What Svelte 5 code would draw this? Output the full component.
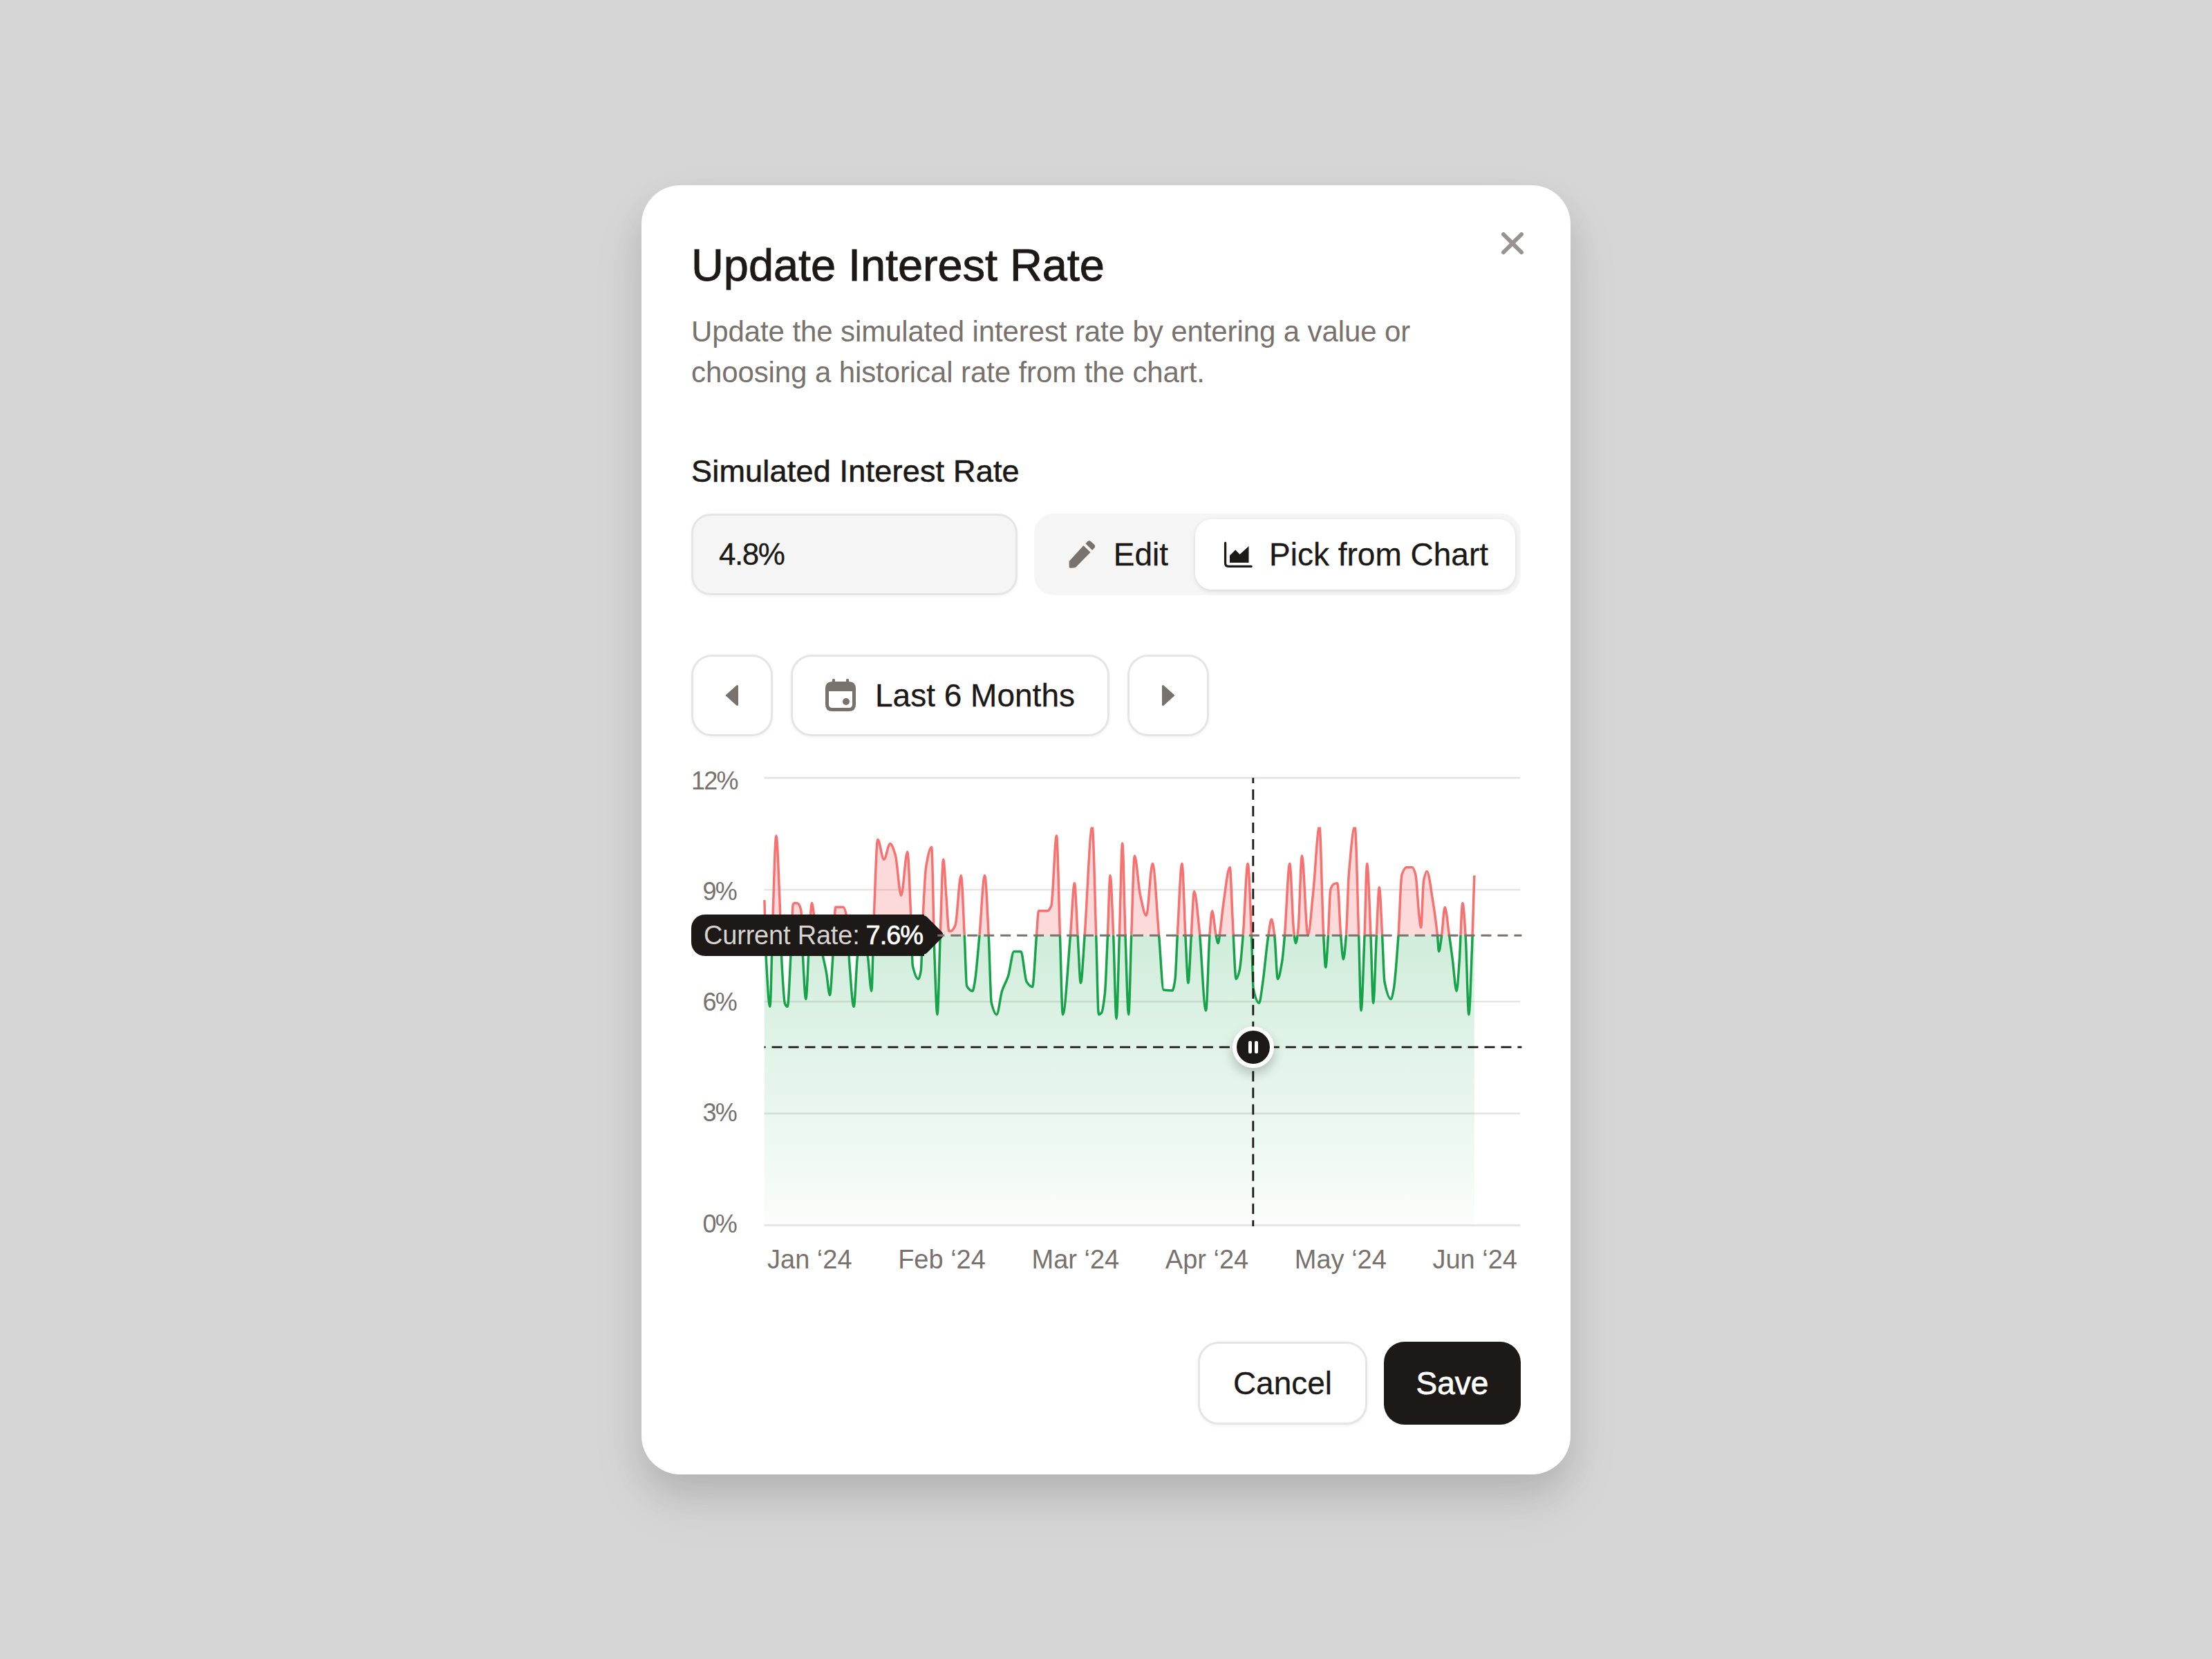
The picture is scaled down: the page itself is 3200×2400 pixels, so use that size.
<script>
  // traced rate line, in chart units (1/3 px)
  const trace = [
    [16, 335], [24, 600], [40, 798], [52, 420], [67, 55], [82, 330], [92, 620], [105, 785], [116, 798], [130, 580], [140, 355], [148, 347], [162, 350], [175, 380],
    [182, 560], [196, 765], [210, 520], [222, 348], [234, 420], [285, 650], [300, 748], [312, 600], [325, 365], [358, 365], [372, 400], [386, 620], [404, 798], [420, 580],
    [440, 450], [465, 580], [481, 730], [492, 400], [508, 72], [535, 158], [562, 90], [585, 140], [610, 315], [637, 125], [652, 400], [660, 620], [685, 678], [696, 640],
    [705, 400], [718, 190], [742, 105], [755, 580], [767, 832], [780, 480], [793, 158], [806, 320], [818, 470], [825, 470], [845, 445], [870, 228], [885, 490], [895, 708],
    [920, 730], [930, 690], [950, 490], [973, 228], [990, 490], [1002, 780], [1025, 832], [1048, 730], [1075, 665], [1100, 558], [1130, 558], [1155, 690], [1180, 712],
    [1198, 490], [1207, 382], [1245, 382], [1262, 360], [1285, 55], [1300, 490], [1312, 832], [1345, 490], [1363, 262], [1377, 490], [1390, 695], [1407, 490], [1440, 15],
    [1457, 490], [1468, 832], [1480, 825], [1495, 740], [1507, 490], [1518, 228], [1532, 490], [1545, 850], [1558, 490], [1571, 88], [1584, 490], [1598, 832], [1610, 490],
    [1624, 142], [1648, 310], [1675, 402], [1702, 176], [1730, 490], [1750, 725], [1788, 728], [1800, 680], [1810, 490], [1830, 176], [1845, 490], [1857, 695], [1870, 490],
    [1883, 297], [1905, 460], [1934, 815], [1950, 490], [1961, 382], [1978, 490], [1987, 522], [1997, 460], [2010, 350], [2038, 193], [2050, 420], [2065, 678], [2080, 640],
    [2095, 490], [2116, 176], [2132, 490], [2140, 720], [2165, 782], [2180, 700], [2205, 490], [2219, 418], [2232, 490], [2246, 678], [2265, 600], [2276, 490], [2298, 176],
    [2315, 460], [2324, 522], [2335, 460], [2351, 142], [2377, 488], [2400, 300], [2427, 15], [2445, 490], [2454, 627], [2465, 490], [2475, 290], [2490, 265], [2505, 262],
    [2520, 490], [2531, 592], [2543, 490], [2555, 220], [2581, 15], [2598, 490], [2608, 815], [2623, 490], [2634, 176], [2650, 490], [2661, 782], [2675, 490], [2687, 280],
    [2700, 490], [2710, 690], [2737, 765], [2750, 720], [2770, 490], [2785, 225], [2805, 193], [2830, 193], [2845, 225], [2860, 400], [2868, 454], [2880, 250], [2894, 210],
    [2920, 340], [2940, 490], [2946, 558], [2958, 490], [2972, 366], [2990, 480], [3005, 590], [3023, 730], [3035, 600], [3049, 348], [3062, 490], [3076, 832], [3090, 540],
    [3100, 228]
  ];

  // monotone cubic through the points, so peaks don't overshoot
  function monotone(pts) {
    const n = pts.length;
    const slopes = [];
    for (let i = 0; i < n - 1; i++) {
      slopes.push((pts[i + 1][1] - pts[i][1]) / (pts[i + 1][0] - pts[i][0]));
    }
    const tan = pts.map((_, i) => {
      if (i === 0) return slopes[0];
      if (i === n - 1) return slopes[n - 2];
      if (slopes[i - 1] * slopes[i] <= 0) return 0;
      return (2 * slopes[i - 1] * slopes[i]) / (slopes[i - 1] + slopes[i]);
    });
    let d = `M${pts[0][0]} ${pts[0][1]}`;
    for (let i = 0; i < n - 1; i++) {
      const h = (pts[i + 1][0] - pts[i][0]) / 3;
      d += `C${pts[i][0] + h} ${pts[i][1] + tan[i] * h} ${pts[i + 1][0] - h} ${pts[i + 1][1] - tan[i + 1] * h} ${pts[i + 1][0]} ${pts[i + 1][1]}`;
    }
    return d;
  }

  const line = monotone(trace);
  const area = `${line}L3100 1748L16 1748Z`;
  const gridRows = [-196, 290, 776, 1262, 1748];
  const yLabels = ['12%', '9%', '6%', '3%', '0%'];
  const months = ['Jan ‘24', 'Feb ‘24', 'Mar ‘24', 'Apr ‘24', 'May ‘24', 'Jun ‘24'];
</script>

<div class="page">
  <div class="modal">
    <button class="close" aria-label="Close">
      <svg viewBox="0 0 32 32" width="32" height="32"><path d="M3 3L29 29M29 3L3 29" /></svg>
    </button>

    <h1>Update Interest Rate</h1>
    <p class="desc">Update the simulated interest rate by entering a value or choosing a historical rate from the chart.</p>

    <div class="label">Simulated Interest Rate</div>
    <div class="rate-row">
      <div class="input">4.8%</div>
      <div class="segment">
        <div class="tab">
          <svg class="tab-icon" viewBox="0 0 24 24">
            <path fill="#78716c" d="M2 17.500L13.300 5 18.800 10.300 7.200 22.200Q5.500 22.800 3 22.800 2 22.800 2 21.800Z" />
            <path fill="#78716c" d="M15 3.600L16.600 1.800Q17.800 0.700 19 1.700L21.900 4.400Q23 5.600 22 6.800L20.300 8.700Z" />
          </svg>
          <span>Edit</span>
        </div>
        <div class="tab active">
          <svg class="tab-icon" viewBox="0 0 24 24">
            <path fill="none" stroke="#1c1917" stroke-width="1.800" stroke-linecap="round" d="M2.500 3V19Q2.500 21.500 5 21.500H23" />
            <path fill="#1c1917" d="M6 18.500V13L10.500 8.500 14 12 21 5.500V18.500Z" />
          </svg>
          <span>Pick from Chart</span>
        </div>
      </div>
    </div>

    <div class="range-row">
      <button class="range-btn square" aria-label="Previous">
        <svg viewBox="0 0 18 32" width="18" height="32"><path d="M16.500 2.500V29.500L1.500 16Z" /></svg>
      </button>
      <button class="range-btn range">
        <svg class="cal" viewBox="0 0 44 48" width="44" height="48">
          <rect x="10" y="0" width="4" height="8" rx="1.500" fill="#78716c" />
          <rect x="30" y="0" width="4" height="8" rx="1.500" fill="#78716c" />
          <path fill="#78716c" d="M10 4H34Q44 4 44 14V37Q44 47 34 47H10Q0 47 0 37V14Q0 4 10 4ZM5 18V37Q5 42 10 42H34Q39 42 39 37V18Z" fill-rule="evenodd" />
          <circle cx="30" cy="33" r="5" fill="#78716c" />
        </svg>
        <span>Last 6 Months</span>
      </button>
      <button class="range-btn square" aria-label="Next">
        <svg viewBox="0 0 18 32" width="18" height="32"><path d="M1.500 2.500V29.500L16.500 16Z" /></svg>
      </button>
    </div>

    <div class="chart">
      <div class="y-axis">
        {#each yLabels as label}
          <span>{label}</span>
        {/each}
      </div>

      <div class="plot">
        <svg class="layer" viewBox="15 -197 3285 1946">
          <defs>
            <linearGradient id="below" gradientUnits="userSpaceOnUse" x1="0" y1="488" x2="0" y2="1748">
              <stop offset="0" stop-color="#16a34a" stop-opacity="0.2" />
              <stop offset="1" stop-color="#16a34a" stop-opacity="0.02" />
            </linearGradient>
            <clipPath id="above-rate"><rect x="0" y="18" width="3300" height="470" /></clipPath>
            <clipPath id="below-rate"><rect x="0" y="488" width="3300" height="1270" /></clipPath>
          </defs>

          {#each gridRows as y}
            <line class="grid" x1="15" x2="3300" y1={y} y2={y} />
          {/each}

          <path d={area} fill="#f87171" fill-opacity="0.26" clip-path="url(#above-rate)" />
          <path d={area} fill="url(#below)" clip-path="url(#below-rate)" />
          <path d={line} class="stroke" stroke="#f87171" clip-path="url(#above-rate)" />
          <path d={line} class="stroke" stroke="#16a34a" clip-path="url(#below-rate)" />
        </svg>

        <div class="tip"><span>Current Rate:</span><b>7.6%</b></div>

        <svg class="layer" viewBox="15 -197 3285 1946">
          <line class="dash current" x1="768" x2="3306" y1="488.500" y2="488.500" stroke-dashoffset="15" />
          <line class="dash" x1="15" x2="3306" y1="974" y2="974" stroke-dashoffset="39" />
          <line class="dash" x1="2139" x2="2139" y1="-196" y2="1752" stroke-dashoffset="22" />
        </svg>

        <div class="knob"><i></i><i></i></div>
      </div>

      <div class="x-axis">
        {#each months as month}
          <span>{month}</span>
        {/each}
      </div>
    </div>

    <div class="footer">
      <button class="btn cancel">Cancel</button>
      <button class="btn save">Save</button>
    </div>
  </div>
</div>

<style>
  :global(body) {
    margin: 0;
    background: #d6d6d6;
  }

  .page {
    display: flex;
    align-items: center;
    justify-content: center;
    height: 2400px;
    font-family: 'Liberation Sans', Arial, sans-serif;
    color: #1c1917;
  }

  .modal {
    position: relative;
    box-sizing: border-box;
    width: 1344px;
    padding: 72px;
    background: #fff;
    border-radius: 56px;
    box-shadow:
      0 24px 48px rgba(0, 0, 0, 0.1),
      0 40px 80px rgba(0, 0, 0, 0.08);
  }

  button {
    font: inherit;
    color: inherit;
    background: none;
    border: none;
    padding: 0;
  }

  .close {
    position: absolute;
    top: 68px;
    right: 68px;
    display: flex;
  }

  .close path {
    fill: none;
    stroke: #989390;
    stroke-width: 6;
    stroke-linecap: round;
  }

  h1 {
    margin: 0;
    font-size: 65px;
    font-weight: 400;
    line-height: 88px;
    letter-spacing: -0.1px;
    -webkit-text-stroke: 0.9px #1c1917;
  }

  .desc {
    margin: 22px 0 0;
    font-size: 42px;
    line-height: 59px;
    letter-spacing: -0.1px;
    color: #78716c;
  }

  .label {
    margin-top: 84px;
    font-size: 45px;
    line-height: 60px;
    letter-spacing: 0.2px;
    -webkit-text-stroke: 0.6px #1c1917;
  }

  .rate-row {
    display: flex;
    gap: 24px;
    margin-top: 31px;
  }

  .input {
    box-sizing: border-box;
    display: flex;
    align-items: center;
    width: 472px;
    height: 118px;
    padding-left: 37px;
    font-size: 44px;
    letter-spacing: -1.500px;
    -webkit-text-stroke: 0.3px #1c1917;
    background: #f5f5f5;
    border: 3px solid #e7e5e4;
    border-radius: 28px;
    box-shadow: 0 2px 4px rgba(0, 0, 0, 0.05);
  }

  .segment {
    box-sizing: border-box;
    display: flex;
    justify-content: flex-end;
    width: 704px;
    height: 118px;
    padding: 8px;
    background: #f5f5f5;
    border-radius: 28px;
  }

  .tab {
    display: flex;
    flex-shrink: 0;
    align-items: center;
    gap: 24px;
    padding: 0 39px;
    font-size: 46px;
    white-space: nowrap;
    -webkit-text-stroke: 0.3px #1c1917;
    border-radius: 24px;
  }

  .tab.active {
    background: #fff;
    box-shadow: 0 2px 6px rgba(0, 0, 0, 0.12);
  }

  .tab-icon {
    width: 44px;
    height: 44px;
  }

  .range-row {
    display: flex;
    gap: 26px;
    margin-top: 86px;
  }

  .range-btn {
    box-sizing: border-box;
    display: flex;
    align-items: center;
    justify-content: center;
    height: 118px;
    background: #fff;
    border: 3px solid #e7e5e4;
    border-radius: 30px;
    box-shadow: 0 2px 4px rgba(0, 0, 0, 0.05);
  }

  .range-btn.square {
    width: 118px;
  }

  .range-btn.square path {
    fill: #78716c;
    stroke: #78716c;
    stroke-width: 3;
    stroke-linejoin: round;
  }

  .range-btn.range {
    gap: 28px;
    width: 461px;
    font-size: 46px;
    -webkit-text-stroke: 0.3px #1c1917;
  }

  .chart {
    position: relative;
    display: grid;
    grid-template-columns: 105px 1095px;
    margin-top: 60px;
  }

  .y-axis {
    display: flex;
    flex-direction: column;
    justify-content: space-between;
    margin: -15px 0 -18px;
    padding-right: 40px;
    font-size: 36px;
    line-height: 40px;
    letter-spacing: -1.800px;
    text-align: right;
    color: #78716c;
  }

  .plot {
    position: relative;
    height: 648px;
  }

  .layer {
    position: absolute;
    inset: 0;
    width: 100%;
    height: 100%;
    overflow: visible;
  }

  .grid {
    stroke: #e7e5e4;
    stroke-width: 8;
  }

  .stroke {
    fill: none;
    stroke-width: 10.500;
    stroke-linejoin: round;
  }

  .dash {
    stroke: #1c1917;
    stroke-width: 8.500;
    stroke-dasharray: 45 27;
  }

  .dash.current {
    stroke: #78716c;
  }

  .tip {
    position: absolute;
    left: -105px;
    top: 198px;
    box-sizing: border-box;
    width: 337px;
    height: 60px;
    padding-left: 18px;
    font-size: 38px;
    line-height: 60px;
    letter-spacing: -0.200px;
    white-space: nowrap;
    color: #d6d3d1;
    background: #1c1917;
    border-radius: 20px 0 0 20px;
  }

  .tip::after {
    content: '';
    position: absolute;
    top: 8px;
    right: -21px;
    width: 43px;
    height: 43px;
    background: #1c1917;
    border-radius: 6px;
    transform: rotate(45deg);
  }

  .tip b {
    position: relative;
    z-index: 1;
    margin-left: 9px;
    font-weight: 400;
    letter-spacing: -1px;
    color: #fff;
    -webkit-text-stroke: 0.7px #fff;
  }

  .knob {
    position: absolute;
    left: 678px;
    top: 360px;
    box-sizing: border-box;
    display: flex;
    align-items: center;
    justify-content: center;
    gap: 4px;
    width: 60px;
    height: 60px;
    background: #1c1917;
    border: 6px solid #fff;
    border-radius: 50%;
    box-shadow: 0 8px 16px rgba(0, 0, 0, 0.22);
  }

  .knob i {
    width: 5px;
    height: 18px;
    background: #fff;
    border-radius: 2px;
  }

  .x-axis {
    grid-column: 2;
    display: flex;
    justify-content: space-between;
    padding: 0 5px;
    margin-top: 29px;
    font-size: 38px;
    line-height: 40px;
    letter-spacing: 0;
    color: #78716c;
  }

  .footer {
    display: flex;
    justify-content: flex-end;
    gap: 24px;
    margin-top: 99px;
  }

  .btn {
    box-sizing: border-box;
    height: 120px;
    font-size: 46px;
    border-radius: 30px;
  }

  .cancel {
    width: 245px;
    background: #fff;
    border: 3px solid #e7e5e4;
    box-shadow: 0 2px 4px rgba(0, 0, 0, 0.05);
    -webkit-text-stroke: 0.3px #1c1917;
  }

  .save {
    width: 198px;
    color: #fff;
    background: #1c1917;
    -webkit-text-stroke: 0.8px #fff;
  }
</style>
